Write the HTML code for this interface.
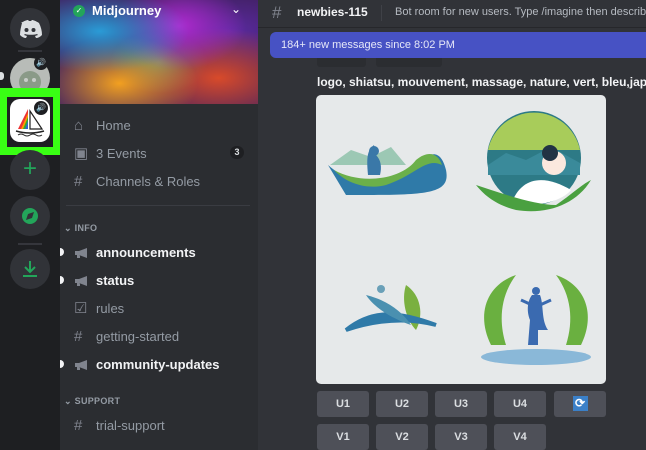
<!DOCTYPE html>
<html><head><meta charset="utf-8"><style>
*{margin:0;padding:0;box-sizing:border-box}
body{width:646px;height:450px;overflow:hidden;background:#313338;font-family:"Liberation Sans",sans-serif;position:relative}
.rail{position:absolute;left:0;top:0;width:60px;height:450px;background:#1e1f22}
.circ{position:absolute;left:10px;width:40px;height:40px;border-radius:50%;background:#313338}
.chan{position:absolute;left:60px;top:0;width:198px;height:450px;background:#2b2d31}
.banner{position:absolute;left:60px;top:0;width:198px;height:104px;background:
radial-gradient(ellipse at 20% 30%,#2a9bd6 0,transparent 40%),
radial-gradient(ellipse at 60% 25%,#b02ad0 0,transparent 40%),
radial-gradient(ellipse at 30% 80%,#f2a020 0,transparent 40%),
radial-gradient(ellipse at 80% 75%,#d84a2a 0,transparent 45%),
radial-gradient(ellipse at 85% 30%,#5a2aa0 0,transparent 40%),
radial-gradient(ellipse at 50% 60%,#20b0a0 0,transparent 35%),#402060}
.item{position:absolute;left:74px;font-size:13px;color:#949ba4;display:flex;align-items:center}
.item i{display:inline-block;width:14px;height:12px;margin-right:8px;font-style:normal;font-size:15px;color:#80848e;line-height:12px}
.bold{color:#f2f3f5;font-weight:bold}
.cat{position:absolute;left:64px;font-size:9px;color:#949ba4;font-weight:bold;letter-spacing:.3px}
.dot{position:absolute;left:60px;width:4px;height:8px;border-radius:0 4px 4px 0;background:#f2f3f5}
.btn{position:absolute;width:52px;height:26px;background:#4e5058;border-radius:3px;color:#dbdee1;font-size:11px;font-weight:bold;text-align:center;line-height:26px}
</style></head><body>
<div class="rail"></div>
<div class="circ" style="top:8px;background:#313338"><svg width="40" height="40"><path d="M11 15c3-2 6-3 7-3l1 1c1 0 2 0 2 0l1-1c1 0 4 1 7 3 2 4 3 8 3 12-2 2-4 3-6 3l-1-2 3-1-1-1c-3 1-9 1-12 0l-1 1 3 1-1 2c-2 0-4-1-6-3 0-4 1-8 2-12z" fill="#dbdee1"/><circle cx="16.5" cy="22" r="2" fill="#313338"/><circle cx="23.5" cy="22" r="2" fill="#313338"/></svg></div>
<div style="position:absolute;left:18px;top:50px;width:24px;height:2px;background:#35363c"></div>
<div class="circ" style="top:58px;background:#b8bcb8"><svg width="40" height="40"><circle cx="20" cy="24" r="11" fill="#8a9a88"/><circle cx="16" cy="22" r="2" fill="#c8ccc8"/><circle cx="24" cy="22" r="2" fill="#c8ccc8"/></svg></div>
<div style="position:absolute;left:34px;top:56px;width:14px;height:14px;border-radius:50%;background:#1e1f22;color:#ddd;font-size:8px;text-align:center;line-height:14px">🔊</div>
<div style="position:absolute;left:-2px;top:72px;width:6px;height:8px;border-radius:4px;background:#dbdee1"></div>
<div style="position:absolute;left:0;top:88px;width:62px;height:67px;background:#39ff14"></div>
<div style="position:absolute;left:7px;top:97px;width:46px;height:50px;background:#1e1f22"></div>
<div style="position:absolute;left:10px;top:99px;width:40px;height:43px;border-radius:10px;background:#fff;overflow:hidden"><svg width="40" height="43"><path d="M18 10 L18 30 L8 30 Z" fill="#e33"/><path d="M18 14 L18 30 L11 30Z" fill="#f90"/><path d="M18 18L18 30L13 30Z" fill="#3a3"/><path d="M18 22L18 30L15 30Z" fill="#36c"/><path d="M20 12 L32 30 L20 30Z" fill="none" stroke="#222" stroke-width="1.2"/><path d="M6 32 Q20 36 34 32" stroke="#222" fill="none" stroke-width="1.5"/><path d="M8 36q3-2 6 0t6 0 6 0 6 0" stroke="#222" fill="none"/></svg></div>
<div style="position:absolute;left:34px;top:101px;width:14px;height:14px;border-radius:50%;background:#1e1f22;color:#ddd;font-size:8px;text-align:center;line-height:14px">🔊</div>
<div class="circ" style="top:150px"><div style="color:#23a55a;font-size:24px;text-align:center;line-height:38px">+</div></div>
<div class="circ" style="top:196px"><svg width="40" height="40"><circle cx="20" cy="20" r="8" fill="#23a55a"/><path d="M16 24l2-6 6-2-2 6z" fill="#313338"/></svg></div>
<div style="position:absolute;left:18px;top:243px;width:24px;height:2px;background:#35363c"></div>
<div class="circ" style="top:249px"><svg width="40" height="40"><path d="M20 12v11M15 18l5 5 5-5M13 27h14" stroke="#23a55a" stroke-width="2" fill="none"/></svg></div>

<div class="chan"></div>
<div class="banner"></div>
<div style="position:absolute;left:73px;top:5px;width:12px;height:12px;border-radius:50%;background:#23a55a;color:#fff;font-size:8px;text-align:center;line-height:12px">✓</div>
<div style="position:absolute;left:92px;top:3px;font-size:13px;font-weight:bold;color:#fff">Midjourney</div>
<div style="position:absolute;left:231px;top:2px;font-size:12px;color:#fff">⌄</div>
<div class="item" style="top:118px"><i>⌂</i>Home</div>
<div class="item" style="top:146px"><i>▣</i>3 Events</div>
<div style="position:absolute;left:230px;top:146px;width:14px;height:13px;border-radius:7px;background:#1e1f22;color:#dbdee1;font-size:9px;font-weight:bold;text-align:center;line-height:13px">3</div>
<div class="item" style="top:174px"><i>#</i>Channels &amp; Roles</div>
<div style="position:absolute;left:66px;top:205px;width:184px;height:1px;background:#3a3c42"></div>
<div class="cat" style="top:223px">⌄ INFO</div>
<div class="dot" style="top:248px"></div><div class="item bold" style="top:245px"><i><svg width="14" height="12"><path d="M1 4h4l8-3v10L5 8H1z M3 8v3h3V8" fill="#80848e"/></svg></i>announcements</div>
<div class="dot" style="top:276px"></div><div class="item bold" style="top:273px"><i><svg width="14" height="12"><path d="M1 4h4l8-3v10L5 8H1z M3 8v3h3V8" fill="#80848e"/></svg></i>status</div>
<div class="item" style="top:301px"><i>☑</i>rules</div>
<div class="item" style="top:329px"><i>#</i>getting-started</div>
<div class="dot" style="top:360px"></div><div class="item bold" style="top:357px"><i><svg width="14" height="12"><path d="M1 4h4l8-3v10L5 8H1z M3 8v3h3V8" fill="#80848e"/></svg></i>community-updates</div>
<div class="cat" style="top:396px">⌄ SUPPORT</div>
<div class="item" style="top:418px"><i>#</i>trial-support</div>

<div style="position:absolute;left:258px;top:0;width:388px;height:28px;border-bottom:1px solid #26272b"></div>
<div style="position:absolute;left:272px;top:3px;font-size:17px;color:#80848e">#</div>
<div style="position:absolute;left:297px;top:5px;font-size:12px;font-weight:bold;color:#f2f3f5">newbies-115</div>
<div style="position:absolute;left:381px;top:5px;width:1px;height:16px;background:#3f4147"></div>
<div style="position:absolute;left:395px;top:6px;font-size:11px;color:#b5bac1;white-space:nowrap">Bot room for new users. Type /imagine then describe</div>
<div style="position:absolute;left:317px;top:52px;width:49px;height:15px;background:#2b2d31;border-radius:3px"></div>
<div style="position:absolute;left:376px;top:52px;width:66px;height:15px;background:#2b2d31;border-radius:3px"></div>
<div style="position:absolute;left:270px;top:32px;width:376px;height:26px;background:#4752c4;border-radius:6px 0 0 6px"></div>
<div style="position:absolute;left:281px;top:39px;font-size:11px;color:#e6e8f8">184+ new messages since 8:02 PM</div>
<div style="position:absolute;left:317px;top:75px;font-size:12px;font-weight:bold;color:#f2f3f5;white-space:nowrap">logo, shiatsu, mouvement, massage, nature, vert, bleu,jap</div>
<div style="position:absolute;left:316px;top:95px;width:290px;height:289px;background:#e6e9ea;border-radius:5px;overflow:hidden">
<svg width="290" height="289">
<path d="M14 70 L35 55 L55 62 L75 52 L90 70Z" fill="#9cc8b4"/>
<path d="M52 80 C50 60 52 55 58 50 L60 60 C65 65 66 72 64 80Z" fill="#3a78a8"/><circle cx="58" cy="56" r="5" fill="#3a78a8"/>
<path d="M12 70 C40 95 80 95 100 70 C115 55 125 55 130 75 C135 100 110 100 30 100 Z" fill="#2f7aa8"/>
<path d="M18 75 C45 90 85 85 100 65 C112 55 122 58 126 70 C110 62 100 80 70 90 C50 95 30 88 18 75Z" fill="#6bb04a"/>
<circle cx="218" cy="63" r="47" fill="#2d7a86"/>
<path d="M172 55 A47 47 0 0 1 264 55Z" fill="#a8cc5a"/>
<path d="M172 70 L190 58 L210 65 L235 52 L264 68 L264 80 L172 80Z" fill="#3a8a9a"/>
<path d="M195 110 C205 80 230 80 255 95 C245 108 215 112 195 110Z" fill="#fff"/>
<circle cx="238" cy="68" r="12" fill="#fbe8de"/><circle cx="234" cy="58" r="8" fill="#234"/>
<path d="M160 90 C190 100 220 110 240 110 C255 100 265 90 275 85 C260 110 230 120 200 115 C180 110 168 100 160 90Z" fill="#4aa040"/>
<circle cx="65" cy="194" r="4" fill="#6aa0b8"/>
<path d="M90 190 C105 200 108 220 100 235 C90 225 85 205 90 190Z" fill="#7ab040"/>
<path d="M30 235 C55 215 80 215 120 230 C90 222 60 225 30 235Z" fill="#2f7aa8" stroke="#2f7aa8" stroke-width="4"/>
<path d="M50 200 C70 205 85 215 95 230 C80 225 60 215 50 200Z" fill="#4a90b0"/>
<path d="M175 250 C160 220 170 190 200 180 C185 200 182 225 190 250Z" fill="#6ab040"/>
<path d="M265 250 C280 220 270 190 240 180 C255 200 258 225 250 250Z" fill="#6ab040"/>
<path d="M212 250 L214 225 C210 215 212 205 216 200 L224 200 C228 210 225 225 232 235 L222 235 L222 250Z" fill="#3a6ab0"/>
<path d="M205 205 L216 210 M235 205 L224 210" stroke="#3a6ab0" stroke-width="3"/>
<circle cx="220" cy="196" r="4" fill="#3a6ab0"/>
<ellipse cx="220" cy="262" rx="55" ry="8" fill="#8ab8d8"/>
</svg></div>
<div class="btn" style="left:317px;top:391px">U1</div>
<div class="btn" style="left:376px;top:391px">U2</div>
<div class="btn" style="left:435px;top:391px">U3</div>
<div class="btn" style="left:494px;top:391px">U4</div>
<div class="btn" style="left:554px;top:391px"><span style="display:inline-block;width:15px;height:15px;background:#3b80c8;margin-top:5px;color:#fff;font-size:12px;line-height:15px">⟳</span></div>
<div class="btn" style="left:317px;top:424px">V1</div>
<div class="btn" style="left:376px;top:424px">V2</div>
<div class="btn" style="left:435px;top:424px">V3</div>
<div class="btn" style="left:494px;top:424px">V4</div>
</body></html>
